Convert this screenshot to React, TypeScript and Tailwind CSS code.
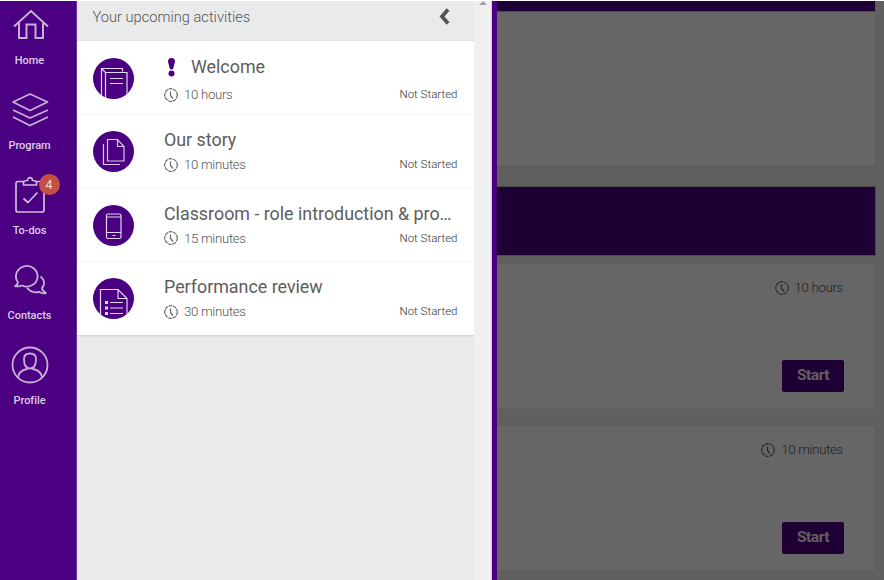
import type { ReactNode } from "react";

type Activity = {
  title: string;
  duration: string;
  icon: ReactNode;
  important?: boolean;
};

const navItems = [
  { label: "Home", icon: <HomeIcon /> },
  { label: "Program", icon: <ProgramIcon /> },
  { label: "To-dos", icon: <TodosIcon />, badge: 4 },
  { label: "Contacts", icon: <ContactsIcon /> },
  { label: "Profile", icon: <ProfileIcon /> },
];

const activities: Activity[] = [
  { title: "Welcome", duration: "10 hours", icon: <BookIcon />, important: true },
  { title: "Our story", duration: "10 minutes", icon: <FilesIcon /> },
  { title: "Classroom - role introduction & pro…", duration: "15 minutes", icon: <PhoneIcon /> },
  { title: "Performance review", duration: "30 minutes", icon: <ListIcon /> },
];

export default function App() {
  return (
    <div className="flex h-[580px] w-[884px] overflow-hidden bg-white pt-px font-['Roboto',sans-serif]">
      <Sidebar />
      <ActivityPanel />
      {/* Scrollbar */}
      <div className="flex w-[17px] shrink-0 justify-center bg-[#f0f0f0]">
        <svg width="8" height="4" viewBox="0 0 8 4">
          <path d="M0 4L4 0l4 4z" fill="#a3a3a3" />
        </svg>
      </div>
      <div className="w-[6px] shrink-0 border-l border-[#d5cbe4] bg-[#4b0082]" />
      <Program />
    </div>
  );
}

function Sidebar() {
  return (
    <nav className="flex w-[77px] shrink-0 flex-col border-r border-[#6c31a0] bg-[#4b0082]">
      {navItems.map((item) => (
        <a key={item.label} className="flex h-[85px] w-[59px] shrink-0 flex-col items-center pt-[5px]">
          <span className="relative h-10 w-10">
            {item.icon}
            {item.badge && (
              <span className="absolute -top-[2px] left-[29px] flex h-[21px] w-[21px] items-center justify-center rounded-full bg-[#c64f41] text-[13px] text-[#f1d9dd]">
                {item.badge}
              </span>
            )}
          </span>
          <span className="mt-[7px] text-[11px] leading-4 font-medium tracking-[-0.05px] text-[#dccce7]">{item.label}</span>
        </a>
      ))}
    </nav>
  );
}

function ActivityPanel() {
  return (
    <section className="w-[397px] shrink-0 bg-[#e9eaec]">
      <header className="flex h-10 items-center justify-between border-b border-[#e3e4e6] pr-[24px] pb-[7px] pl-[15.5px]">
        <h2 className="-mt-px text-[14.65px] leading-5 font-light text-[#555]">Your upcoming activities</h2>
        <svg width="11" height="18" viewBox="0 0 11 18" fill="none">
          <path d="M9 1.500L3 8.500l6 7" stroke="#555" strokeWidth="3.8" />
        </svg>
      </header>
      <div className="bg-white shadow-[0_1px_2px_rgba(0,0,0,0.12)]">
        {activities.map((activity) => (
          <ActivityRow key={activity.title} {...activity} />
        ))}
      </div>
    </section>
  );
}

function ActivityRow({ title, duration, icon, important }: Activity) {
  return (
    <div className="flex h-[73.5px] border-b border-[#f7f7f7] pr-[16.5px] pl-4 last:border-b-0">
      <div className="mt-[16.5px] h-[41px] w-[41px] shrink-0 overflow-hidden rounded-full bg-[#4b0082]">{icon}</div>
      <div className="ml-[30px] flex min-w-0 flex-1 flex-col pt-[13.5px]">
        <div className="flex h-6 items-center">
          {important && (
            <svg className="mr-[15px] ml-[3px] shrink-0" width="9" height="20" viewBox="0 0 8 20" fill="#4b0082">
              <path d="M4 1C1.8 1 .3 2.600 .5 4.700L2.500 12.300h3L7.500 4.700C7.700 2.600 6.200 1 4 1z" />
              <circle cx="4" cy="16.500" r="3" />
            </svg>
          )}
          <h3 className="text-[17.85px] leading-6 whitespace-nowrap text-[#5d5d5d]">{title}</h3>
        </div>
        <div className={important ? "mt-[5.5px] flex items-center justify-between" : "mt-[2px] flex items-center justify-between"}>
          <Duration text={duration} />
          <span className="text-[11.5px] leading-4 font-light text-[#333]">Not Started</span>
        </div>
      </div>
    </div>
  );
}

function Duration({ text }: { text: string }) {
  return (
    <span className="flex items-center gap-[6px] text-[13.2px] leading-5 font-light tracking-[-0.3px] text-[#555]">
      <svg className="mt-px" width="14" height="14" viewBox="0 0 14 14" fill="none" stroke="#666">
        <circle cx="7" cy="7" r="6.300" strokeWidth="1.2" strokeDasharray="3.700 .7" />
        <path d="M6.500 3.500v4l2.500 3" strokeWidth="1.2" />
      </svg>
      <span className="mt-px -mb-px">{text}</span>
    </span>
  );
}

function Program() {
  return (
    <main className="relative flex-1 bg-[#f0f0f0] pr-[9px]">
      <div className="h-[10px] bg-[#4b0082]" />
      <div className="h-[155px] border-t border-[#c9c0d2] bg-white shadow-[0_1px_2px_rgba(0,0,0,0.12)]" />
      <div className="mt-[21px] h-[68px] bg-[#4b0082] shadow-[0_0_1px_1px_rgba(0,0,0,0.2)]" />
      <ProgramCard duration="10 hours" className="mt-[9px]" />
      <ProgramCard duration="10 minutes" className="mt-[17px]" />
      {/* Backdrop behind the open panel */}
      <div className="absolute inset-0 bg-black/60" />
    </main>
  );
}

function ProgramCard({ duration, className }: { duration: string; className: string }) {
  return (
    <div className={`flex h-[145px] flex-col items-end justify-between bg-white pt-[13px] pr-[31px] pb-[17px] shadow-[0_0_2px_rgba(0,0,0,0.1)] ${className}`}>
      <div className="pr-px">
        <Duration text={duration} />
      </div>
      <button className="h-8 w-[62px] rounded-[2px] bg-[#4b0082] pb-px text-[15.500px] font-bold tracking-[-0.5px] text-[#eee]" type="button">
        Start
      </button>
    </div>
  );
}

function HomeIcon() {
  return (
    <svg className="text-[#c6afd8]" width="40" height="40" viewBox="0 0 40 40" fill="none" stroke="currentColor" strokeWidth="2">
      <path d="M4 20.500L21 5l17 15.500M9 17v15h7.500V18.500h9V32H33V17" />
    </svg>
  );
}

function ProgramIcon() {
  return (
    <svg className="text-[#c6afd8]" width="40" height="40" viewBox="0 0 40 40" fill="none" stroke="currentColor" strokeWidth="1.8" strokeLinejoin="round">
      <path d="M3 11L20 3l17.500 8L20 19.500zM3 19L20 27l18-8M3 26L20 34.500l18-8.500" />
    </svg>
  );
}

function TodosIcon() {
  return (
    <svg className="text-[#d0bbdd]" width="40" height="40" viewBox="0 0 40 40" fill="none" stroke="currentColor" strokeWidth="1.7" strokeLinejoin="round">
      <path d="M13.500 5.500H8a2 2 0 0 0-2 2V34a2 2 0 0 0 2 2h24a2 2 0 0 0 2-2V7.500a2 2 0 0 0-2-2h-5.500" />
      <path d="M13.500 9V6.500c0-1.500 1-2 4-2 0-1.700 1-2.800 2.500-2.800s2.500 1.100 2.500 2.800c3 0 4 .5 4 2V9z" />
      <path d="M13.500 22.500l4.500 4 9.500-10" />
    </svg>
  );
}

function ContactsIcon() {
  return (
    <svg className="text-[#c6afd8]" width="40" height="40" viewBox="0 0 40 40" fill="none" stroke="currentColor" strokeWidth="1.8" strokeLinejoin="round">
      <path d="M5 25c2-.8 3-2.400 2.800-4A10.800 10.300 0 1 1 12 24.500c-2 .9-4.500 1.100-7 .5z" />
      <path d="M30.500 15.500c4.500 3.500 4.500 8.500 1.500 11.500 0 2 1.500 3.500 4 5-2.500.6-5 .2-7-1.200-4.500 1.200-9 0-12-4" />
    </svg>
  );
}

function ProfileIcon() {
  return (
    <svg className="text-[#c6afd8]" width="40" height="40" viewBox="0 0 40 40" fill="none" stroke="currentColor" strokeWidth="1.8">
      <circle cx="20" cy="19" r="17.500" />
      <path d="M14 13c0-4 2.500-5.500 6-5.500s6 1.500 6 5.500c0 4-1 9.500-6 9.500s-6-5.500-6-9.500zM8 31.500c.5-5 4-7.500 9-8.500v-1.500M32 31.500c-.5-5-4-7.500-9-8.500v-1.500" />
    </svg>
  );
}

function BookIcon() {
  return (
    <svg className="text-[#e2d6ed]" width="41" height="41" viewBox="0 0 41 41" fill="none" stroke="currentColor" strokeWidth="1.2">
      <path d="M8.500 38V10.500h21v3M12.500 14.500h21.500V41M12.500 14.500V41M8.500 10.500l4 4" />
      <path d="M17 20.500h13M17 25.500h13" />
    </svg>
  );
}

function FilesIcon() {
  return (
    <svg className="text-[#d9caea]" width="41" height="41" viewBox="0 0 41 41" fill="none" stroke="currentColor" strokeWidth="1.2">
      <path d="M14.500 8.500h10l6.500 7v14.500H14.500zM24.500 8.500v7H31M10.500 13v20.500H27" />
    </svg>
  );
}

function PhoneIcon() {
  return (
    <svg className="text-[#e2d6ed]" width="41" height="41" viewBox="0 0 41 41" fill="none" stroke="currentColor" strokeWidth="1.2">
      <rect x="13.500" y="9" width="14.500" height="24.500" rx="1.500" />
      <path d="M13.500 12h14.500M13.500 27.500h14.500M19.500 30.500h3" />
    </svg>
  );
}

function ListIcon() {
  return (
    <svg className="text-[#e2d6ed]" width="41" height="41" viewBox="0 0 41 41" fill="none" stroke="currentColor" strokeWidth="1.2">
      <path d="M7.500 41V11.500H25l9 9V41M25 11.500v9h9" />
      <path d="M17 24.500h13M17 30h13M17 35.500h13" />
      <path d="M12 24.500h3M12 30h3M12 35.500h3" strokeWidth="3" />
    </svg>
  );
}
